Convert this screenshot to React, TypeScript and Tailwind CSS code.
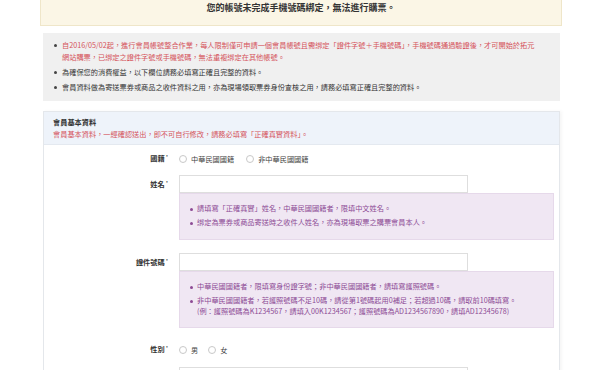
import React from "react";

const font = { fontFamily: '"Noto Sans CJK TC", "Noto Sans", sans-serif' };

function Dot({ color }: { color: string }) {
  return <span className={`mt-[5px] h-[3px] w-[3px] shrink-0 rounded-full ${color}`} />;
}

function Radio({ label }: { label: string }) {
  return (
    <span className="flex items-center gap-[4px]">
      <span className="h-[8px] w-[8px] rounded-full border border-[#c8c8c8] bg-white" />
      <span className="text-[#444]">{label}</span>
    </span>
  );
}

function Label({ text }: { text: string }) {
  return (
    <div className="w-[124px] shrink-0 text-right font-bold text-[#333]">
      {text}
      <span className="relative -top-[2px] ml-[1px] text-[5px] font-normal">*</span>
    </div>
  );
}

export default function App() {
  return (
    <div
      className="h-[370px] w-[600px] overflow-hidden bg-white text-[7.2px] leading-[12px] text-[#333]"
      style={font}
    >
      {/* banner */}
      <div className="ml-[40px] w-[522px] border border-t-0 border-[#efe6c9] bg-[#fbf6e6] pb-[12px] pt-[3px] text-center text-[9px] font-bold leading-[10px] text-[#333]">
        您的帳號未完成手機號碼綁定，無法進行購票。
      </div>

      {/* info box */}
      <div className="ml-[43px] mt-[7px] w-[517px] bg-[#f0f0f0] pb-[8px] pl-[11px] pr-[20px] pt-[6px]">
        <div className="mb-[3px] flex gap-[5px]">
          <Dot color="bg-[#444]" />
          <span className="text-[#d5525a]">
            自2016/05/02起，進行會員帳號整合作業，每人限制僅可申請一個會員帳號且需綁定「證件字號＋手機號碼」，手機號碼通過驗證後，才可開始於拓元網站購票，已綁定之證件字號或手機號碼，無法重複綁定在其他帳號。
          </span>
        </div>
        <div className="mb-[3px] flex gap-[5px]">
          <Dot color="bg-[#444]" />
          <span>為確保您的消費權益，以下欄位請務必填寫正確且完整的資料。</span>
        </div>
        <div className="flex gap-[5px]">
          <Dot color="bg-[#444]" />
          <span>會員資料做為寄送票券或商品之收件資料之用，亦為現場領取票券身份查核之用，請務必填寫正確且完整的資料。</span>
        </div>
      </div>

      {/* member section */}
      <div className="ml-[43px] mt-[10px] w-[517px] border border-[#e4e7eb] shadow-[2px_0_3px_rgba(0,0,0,0.04)]">
        <div className="border-b border-[#e4e9f0] bg-[#eef3fa] px-[9px] pb-[4px] pt-[4px]">
          <div className="font-bold text-[#333]">會員基本資料</div>
          <div className="text-[#d5525a]">會員基本資料，一經確認送出，即不可自行修改，請務必填寫「正確真實資料」。</div>
        </div>
        <div className="bg-white pt-[7px]">
          {/* 國籍 */}
          <div className="flex items-center gap-[11px]">
            <Label text="國籍" />
            <div className="flex items-center gap-[12px]">
              <Radio label="中華民國國籍" />
              <Radio label="非中華民國國籍" />
            </div>
          </div>

          {/* 姓名 */}
          <div className="mt-[10px] flex gap-[11px]">
            <div className="flex h-[18px] items-center">
              <Label text="姓名" />
            </div>
            <div>
              <div className="h-[18px] w-[289px] border border-[#dedede] bg-white" />
              <div className="w-[375px] border border-[#e6d9ea] bg-[#f0e7f3] pb-[11px] pl-[10px] pr-[8px] pt-[9px] leading-[11px] text-[#8d4b95]">
                <div className="mb-[3px] flex gap-[4px]">
                  <Dot color="bg-[#8d4b95]" />
                  <span>請填寫「正確真實」姓名，中華民國國籍者，限填中文姓名。</span>
                </div>
                <div className="flex gap-[4px]">
                  <Dot color="bg-[#8d4b95]" />
                  <span>綁定為票券或商品寄送時之收件人姓名，亦為現場取票之購票會員本人。</span>
                </div>
              </div>
            </div>
          </div>

          {/* 證件號碼 */}
          <div className="mt-[13px] flex gap-[11px]">
            <div className="flex h-[18px] items-center">
              <Label text="證件號碼" />
            </div>
            <div>
              <div className="h-[18px] w-[289px] border border-[#dedede] bg-white" />
              <div className="w-[375px] border border-[#e6d9ea] bg-[#f0e7f3] pb-[10px] pl-[10px] pr-[8px] pt-[9px] leading-[11px] text-[#8d4b95]">
                <div className="mb-[3px] flex gap-[4px]">
                  <Dot color="bg-[#8d4b95]" />
                  <span>中華民國國籍者，限填寫身份證字號；非中華民國國籍者，請填寫護照號碼。</span>
                </div>
                <div className="flex gap-[4px]">
                  <Dot color="bg-[#8d4b95]" />
                  <span>
                    非中華民國國籍者，若護照號碼不足10碼，請從第1號碼起用0補足；若超過10碼，請取前10碼填寫。
                    <br />
                    (例：護照號碼為K1234567，請填入00K1234567；護照號碼為AD1234567890，請填AD12345678)
                  </span>
                </div>
              </div>
            </div>
          </div>

          {/* 性別 */}
          <div className="mt-[15px] flex items-center gap-[11px]">
            <Label text="性別" />
            <div className="flex items-center gap-[10px]">
              <Radio label="男" />
              <Radio label="女" />
            </div>
          </div>

          <div className="mt-[11px] flex gap-[11px]">
            <div className="w-[124px] shrink-0" />
            <div className="h-[18px] w-[289px] border border-[#dedede] bg-white" />
          </div>
        </div>
      </div>
    </div>
  );
}
